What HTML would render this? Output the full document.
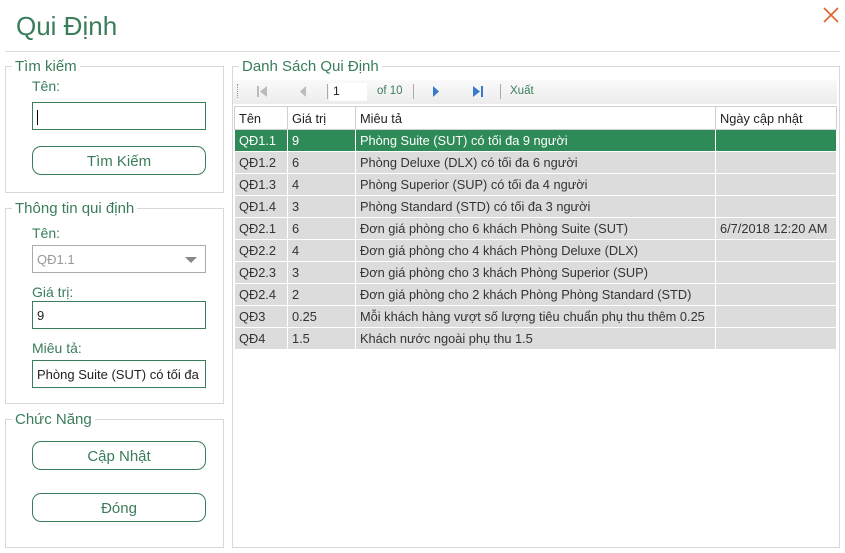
<!DOCTYPE html>
<html><head><meta charset="utf-8"><style>
*{box-sizing:border-box;margin:0;padding:0}
body{width:845px;height:553px;background:#fff;font-family:"Liberation Sans","DejaVu Sans",sans-serif;font-size:13px;color:#222;position:relative;overflow:hidden}
.a{position:absolute}
.g{color:#3a7d5a}
.box{position:absolute;border:1px solid #d8d8d8}
.leg{position:absolute;background:#fff;padding:0 3px;font-size:15px;color:#3a7d5a;top:-8px;left:6px;line-height:16px}
.inp{position:absolute;border:1px solid #3a7d5a;background:#fff;font-size:13px;padding:0 4px;line-height:28px;height:28px}
.btn{position:absolute;border:1px solid #3a7d5a;border-radius:9px;text-align:center;color:#3a7d5a;font-size:15px;line-height:30px;height:29px}
.lbl{position:absolute;font-size:14px;color:#3a7d5a}
table{border-collapse:collapse;position:absolute;left:234px;top:106px;table-layout:fixed}
td{height:22px;padding:0 4px;border:1px solid #fff;background:#dcdcdc;font-size:12.8px;color:#333;white-space:nowrap;overflow:hidden}
tr.h td{background:#fff;border:1px solid #d0d0d0;height:23px;color:#222}
tr.s td{background:#2e8b57;color:#fff}
</style></head><body>
<div class="a g" style="left:16px;top:11px;font-size:26px">Qui Định</div>
<svg class="a" style="left:822px;top:6px" width="18" height="18"><path d="M2 2L16 16M16 2L2 16" stroke="#e0632b" stroke-width="1.6"/></svg>
<div class="a" style="left:5px;top:51px;width:835px;height:1px;background:#ddd"></div>

<div class="box" style="left:5px;top:66px;width:219px;height:127px"><div class="leg">Tìm kiếm</div></div>
<div class="lbl" style="left:32px;top:78px">Tên:</div>
<div class="inp" style="left:32px;top:102px;width:174px"><span style="display:inline-block;width:1px;height:15px;background:#000;vertical-align:middle"></span></div>
<div class="btn" style="left:32px;top:146px;width:174px">Tìm Kiếm</div>

<div class="box" style="left:5px;top:208px;width:219px;height:196px"><div class="leg">Thông tin qui định</div></div>
<div class="lbl" style="left:32px;top:225px">Tên:</div>
<div class="inp" style="left:32px;top:245px;width:174px;border-color:#aaa;color:#999">QĐ1.1<span style="position:absolute;right:8px;top:11px;border-left:6px solid transparent;border-right:6px solid transparent;border-top:6px solid #888"></span></div>
<div class="lbl" style="left:32px;top:284px">Giá trị:</div>
<div class="inp" style="left:32px;top:301px;width:174px">9</div>
<div class="lbl" style="left:32px;top:340px">Miêu tả:</div>
<div class="inp" style="left:32px;top:360px;width:174px;white-space:nowrap;overflow:hidden">Phòng Suite (SUT) có tối đa</div>

<div class="box" style="left:5px;top:419px;width:219px;height:129px"><div class="leg">Chức Năng</div></div>
<div class="btn" style="left:32px;top:441px;width:174px">Cập Nhật</div>
<div class="btn" style="left:32px;top:493px;width:174px">Đóng</div>

<div class="box" style="left:232px;top:66px;width:608px;height:482px"><div class="leg">Danh Sách Qui Định</div></div>
<div class="a" style="left:233px;top:80px;width:604px;height:24px;background:linear-gradient(#fafafa,#ececec)"></div>
<div class="a" style="left:237px;top:84px;width:1px;height:14px;border-left:1px dotted #999"></div>
<svg class="a" style="left:256px;top:85px" width="14" height="13"><rect x="1" y="1" width="2" height="11" fill="#bbb"/><path d="M11 1L4 6.5L11 12Z" fill="#bbb"/></svg>
<svg class="a" style="left:298px;top:85px" width="10" height="13"><path d="M8 1L2 6.5L8 12Z" fill="#bbb"/></svg>
<div class="a" style="left:327px;top:84px;width:1px;height:15px;background:#aaa"></div>
<div class="a" style="left:329px;top:83px;width:38px;height:18px;background:#fff;font-size:12px;padding:1px 4px">1</div>
<div class="a g" style="left:377px;top:85px;font-size:11.5px">of 10</div>
<div class="a" style="left:413px;top:84px;width:1px;height:15px;background:#aaa"></div>
<svg class="a" style="left:431px;top:85px" width="10" height="13"><path d="M2 1L8 6.5L2 12Z" fill="#3a78c9"/></svg>
<svg class="a" style="left:471px;top:85px" width="14" height="13"><path d="M2 1L9 6.5L2 12Z" fill="#3a78c9"/><rect x="10" y="1" width="2" height="11" fill="#3a78c9"/></svg>
<div class="a" style="left:500px;top:84px;width:1px;height:15px;background:#aaa"></div>
<div class="a g" style="left:510px;top:85px;font-size:11.5px">Xuất</div>

<table>
<colgroup><col style="width:53px"><col style="width:68px"><col style="width:360px"><col style="width:121px"></colgroup>
<tr class="h"><td>Tên</td><td>Giá trị</td><td>Miêu tả</td><td>Ngày cập nhật</td></tr>
<tr class="s"><td>QĐ1.1</td><td>9</td><td>Phòng Suite (SUT) có tối đa 9 người</td><td></td></tr>
<tr><td>QĐ1.2</td><td>6</td><td>Phòng Deluxe (DLX) có tối đa 6 người</td><td></td></tr>
<tr><td>QĐ1.3</td><td>4</td><td>Phòng Superior (SUP) có tối đa 4 người</td><td></td></tr>
<tr><td>QĐ1.4</td><td>3</td><td>Phòng Standard (STD) có tối đa 3 người</td><td></td></tr>
<tr><td>QĐ2.1</td><td>6</td><td>Đơn giá phòng cho 6 khách Phòng Suite (SUT)</td><td>6/7/2018 12:20 AM</td></tr>
<tr><td>QĐ2.2</td><td>4</td><td>Đơn giá phòng cho 4 khách Phòng Deluxe (DLX)</td><td></td></tr>
<tr><td>QĐ2.3</td><td>3</td><td>Đơn giá phòng cho 3 khách Phòng Superior (SUP)</td><td></td></tr>
<tr><td>QĐ2.4</td><td>2</td><td>Đơn giá phòng cho 2 khách Phòng Phòng Standard (STD)</td><td></td></tr>
<tr><td>QĐ3</td><td>0.25</td><td>Mỗi khách hàng vượt số lượng tiêu chuẩn phụ thu thêm 0.25</td><td></td></tr>
<tr><td>QĐ4</td><td>1.5</td><td>Khách nước ngoài phụ thu 1.5</td><td></td></tr>
</table>
</body></html>
